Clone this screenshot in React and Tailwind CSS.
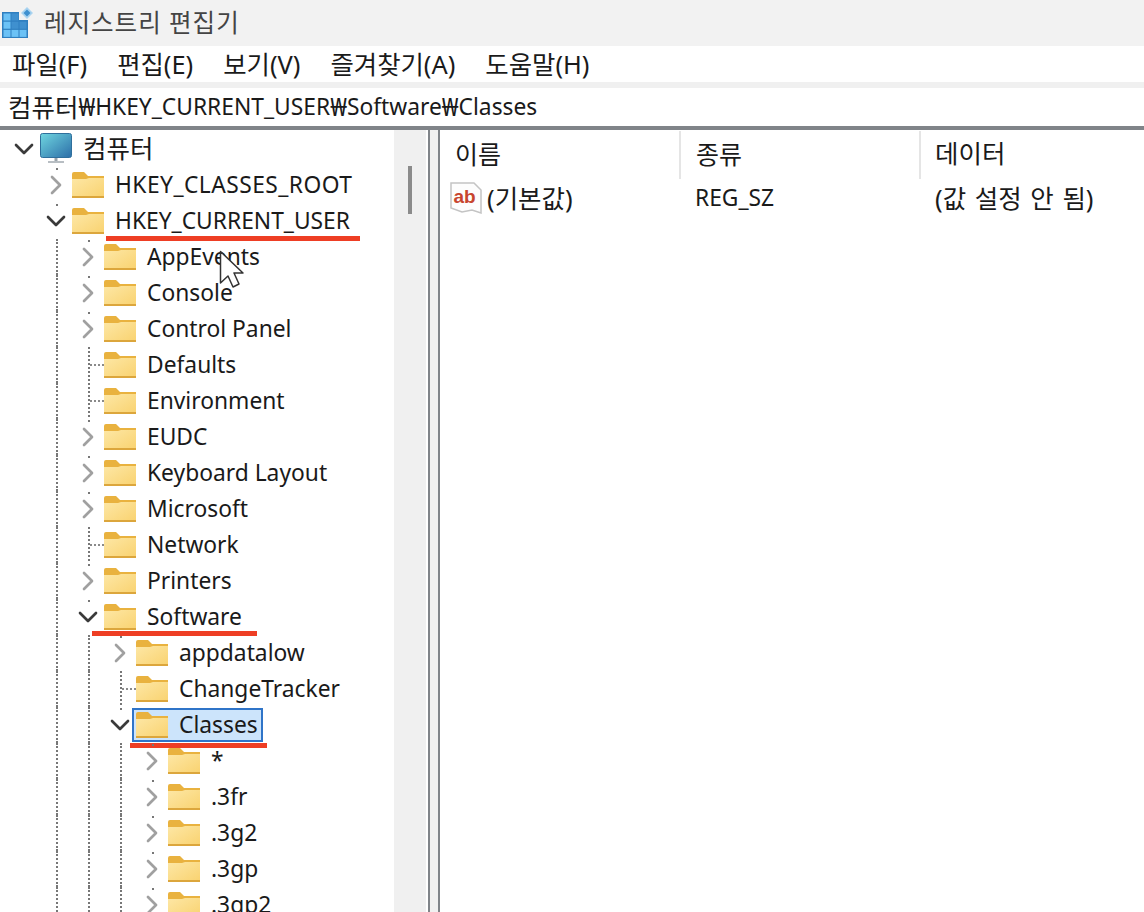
import { ChevronDown, ChevronRight } from "lucide-react";

const SANS = "font-['Noto_Sans','Noto_Sans_CJK_KR',sans-serif]";

// level, label, state: open | closed | leaf, guides = levels that draw a dotted line
const rows = [
  { level: 1, label: "HKEY_CLASSES_ROOT", state: "closed", spacing: 0.45 },
  { level: 1, label: "HKEY_CURRENT_USER", state: "open", mark: { left: 106, top: 33, width: 254 } },
  { level: 2, label: "AppEvents", state: "closed", guides: [1] },
  { level: 2, label: "Console", state: "closed", guides: [1] },
  { level: 2, label: "Control Panel", state: "closed", guides: [1] },
  { level: 2, label: "Defaults", state: "leaf", guides: [1] },
  { level: 2, label: "Environment", state: "leaf", guides: [1] },
  { level: 2, label: "EUDC", state: "closed", guides: [1] },
  { level: 2, label: "Keyboard Layout", state: "closed", guides: [1] },
  { level: 2, label: "Microsoft", state: "closed", guides: [1] },
  { level: 2, label: "Network", state: "leaf", guides: [1] },
  { level: 2, label: "Printers", state: "closed", guides: [1] },
  { level: 2, label: "Software", state: "open", guides: [1], mark: { left: 92, top: 32, width: 165 } },
  { level: 3, label: "appdatalow", state: "closed", guides: [1, 2] },
  { level: 3, label: "ChangeTracker", state: "leaf", guides: [1, 2] },
  { level: 3, label: "Classes", state: "open", guides: [1, 2], selected: true, mark: { left: 130, top: 36, width: 137 } },
  { level: 4, label: "*", state: "closed", guides: [1, 2, 3] },
  { level: 4, label: ".3fr", state: "closed", guides: [1, 2, 3] },
  { level: 4, label: ".3g2", state: "closed", guides: [1, 2, 3] },
  { level: 4, label: ".3gp", state: "closed", guides: [1, 2, 3] },
  { level: 4, label: ".3gp2", state: "closed", guides: [1, 2, 3] },
];

const GRID_CELLS = [
  [0, 0, "#6cc2f6"], [1, 0, "#3f90cf"],
  [0, 1, "#6cc2f6"], [1, 1, "#3f90cf"], [2, 1, "#3f90cf"],
  [0, 2, "#6cc2f6"], [1, 2, "#6cc2f6"], [2, 2, "#6cc2f6"],
];

function RegeditIcon() {
  return (
    <svg width="34" height="38" viewBox="0 0 34 38" className="shrink-0">
      <path d="M2 8 H19 V16 H28 V34 H2 Z" fill="#2f7fc0" />
      {GRID_CELLS.map(([c, r, fill]) => (
        <rect key={`${c}${r}`} x={3.5 + c * 8} y={9.5 + r * 8.2} width="7" height="7" fill={fill} />
      ))}
      <path d="M27 3 L33 9 L27 15 L21 9 Z" fill="#a9d3f0" />
      <path d="M27 5.5 L30.5 9 L27 12.5 L23.5 9 Z" fill="#3f90cf" />
    </svg>
  );
}

function MonitorIcon() {
  return (
    <svg width="33" height="32" viewBox="0 0 33 32" className="shrink-0">
      <defs>
        <linearGradient id="screen" x1="0" y1="0" x2="1" y2="1">
          <stop offset="0" stopColor="#6fd6e0" />
          <stop offset="1" stopColor="#2c6ea8" />
        </linearGradient>
      </defs>
      <rect x="0.5" y="0.5" width="31" height="24" rx="2" fill="url(#screen)" stroke="#2f6f9c" />
      <rect x="14.5" y="25" width="3" height="4" fill="#9aa3aa" />
      <rect x="8" y="28" width="16" height="2" fill="#b8bec3" />
    </svg>
  );
}

function FolderIcon() {
  return (
    <svg width="32" height="26" viewBox="0 0 32 26" className="shrink-0">
      <defs>
        <linearGradient id="folderBody" x1="0" y1="0" x2="1" y2="1">
          <stop offset="0" stopColor="#fde7a5" />
          <stop offset="1" stopColor="#f9d26f" />
        </linearGradient>
      </defs>
      <path d="M0 2 Q0 0 2 0 H12 L16 4 H32 V8 H0 Z" fill="#e9b23f" />
      <path d="M0 7 H14 L17 6 H32 V26 H0 Z" fill="url(#folderBody)" />
      <rect x="0" y="24" width="32" height="2" fill="#dca63c" />
    </svg>
  );
}

function AbIcon() {
  return (
    <svg width="32" height="32" viewBox="0 0 32 32" className="shrink-0">
      <path d="M1 1 H24 L31 8 V31 L22 28 L12 30 L1 26 Z" fill="#fdfdfd" stroke="#c4c4c4" strokeWidth="1.5" />
      <text x="3.5" y="21" fontFamily="Liberation Sans" fontWeight="700" fontSize="19" fill="#c8452e">ab</text>
    </svg>
  );
}

function Cursor() {
  return (
    <svg width="26" height="40" viewBox="0 0 26 40" className="absolute left-[219px] top-[250px]">
      <path d="M1.5 1.5 V33 L9 26 L14 37 L20 34 L15 23 H24 Z" fill="#fff" stroke="#333" strokeWidth="1.5" strokeLinejoin="round" />
    </svg>
  );
}

function Toggle({ state }) {
  if (state === "leaf") {
    return (
      <svg width="32" height="36" viewBox="0 0 32 36" className="shrink-0">
        <path d="M17 0 V36" stroke="#777" strokeWidth="2" strokeDasharray="2 2" />
        <path d="M18 18 H32" stroke="#8a8a8a" strokeWidth="2" strokeDasharray="2 2" />
      </svg>
    );
  }
  return (
    <div className="flex h-full w-8 flex-col items-center">
      <div className="ml-[2px] mt-[1px] size-[2px] shrink-0 bg-[#777]" />
      <div className="-mt-[3px] flex flex-1 items-center">
        {state === "open" ? (
          <ChevronDown size={32} strokeWidth={2} className="text-[#3a3a3a]" />
        ) : (
          <ChevronRight size={32} strokeWidth={2} className="text-[#a0a0a0]" />
        )}
      </div>
    </div>
  );
}

function TreeRow({ level, label, state, guides = [], selected, mark, spacing }) {
  return (
    <div className="relative flex h-9 shrink-0 items-center">
      <div className="w-10 shrink-0" />
      <div className="flex h-full shrink-0">
        {[1, 2, 3].slice(0, level - 1).map((g) => (
          <div key={g} className="w-8 shrink-0 pl-[16px]">
            {guides.includes(g) && <div className="h-full border-l-2 border-dotted border-[#777]" />}
          </div>
        ))}
      </div>
      <div className="flex h-full w-8 shrink-0 items-center justify-center">
        <Toggle state={state} />
      </div>
      <div className={`flex h-[34px] items-center gap-[11px] ${selected ? "-ml-[4px] border-2 border-[#2f74c8] bg-[#cce4fb] pl-[2px] pr-[3px]" : ""}`}>
        <FolderIcon />
        <span
          className={`text-[22.8px] leading-none text-[#1a1a1a] whitespace-nowrap ${SANS}`}
          style={spacing ? { letterSpacing: spacing } : undefined}
        >
          {label}
        </span>
      </div>
      {mark && (
        <div
          className="absolute h-[4.5px] bg-[#ee3e24]"
          style={{ left: mark.left, top: mark.top, width: mark.width }}
        />
      )}
    </div>
  );
}

function ColumnHead({ label, width }) {
  return (
    <div className={`flex h-12 shrink-0 items-center border-r-2 border-[#e5e5e5] pl-[15px] text-[25px] text-[#1a1a1a] ${width}`}>{label}</div>
  );
}

export default function App() {
  return (
    <div className={`relative flex h-[912px] w-[1144px] flex-col overflow-hidden bg-white ${SANS}`}>
      {/* 타이틀바 */}
      <div className="flex h-[46px] shrink-0 items-center gap-[10px] bg-[#f2f2f2]">
        <RegeditIcon />
        <span className="text-[24.5px] tracking-[1px] text-[#444]">레지스트리 편집기</span>
      </div>

      {/* 메뉴 */}
      <div className="flex h-9 shrink-0 items-center gap-[30px] bg-white pl-3 text-[25.4px] text-[#1a1a1a]">
        <span>파일(F)</span>
        <span>편집(E)</span>
        <span>보기(V)</span>
        <span>즐겨찾기(A)</span>
        <span>도움말(H)</span>
      </div>
      <div className="h-[6px] shrink-0 bg-[#f0f0f0]" />

      {/* 주소창 */}
      <div className="flex h-[38px] shrink-0 items-center whitespace-pre pl-2 text-[22.8px] text-[#1a1a1a]">
        <span className="text-[25.5px]">컴퓨터</span>
        <span className="text-[25px]">₩</span>HKEY_CURRENT_USER<span className="text-[25px]">₩</span>Software<span className="text-[25px]">₩</span>Classes
      </div>
      <div className="h-1 shrink-0 bg-[#808489]" />

      <div className="flex min-h-0 flex-1">
        {/* 트리 */}
        <div className="flex w-[428px] shrink-0">
          <div className="flex w-[394px] shrink-0 flex-col overflow-hidden pt-[1px]">
            <div className="flex h-9 shrink-0 items-center">
              <div className="flex w-[40px] shrink-0 justify-center pl-[7px]">
                <ChevronDown size={32} strokeWidth={2} className="shrink-0 text-[#3a3a3a]" />
              </div>
              <MonitorIcon />
              <span className="mb-[2px] ml-[10px] text-[25.5px] text-[#1a1a1a]">컴퓨터</span>
            </div>
            {rows.map((row) => (
              <TreeRow key={row.label} {...row} />
            ))}
          </div>
          <div className="w-8 shrink-0 bg-[#f0f0f0] pl-[14px] pt-9">
            <div className="h-12 w-1 bg-[#8b8b8b]" />
          </div>
          <div className="w-[2px] shrink-0" />
        </div>

        {/* 분할선 */}
        <div className="w-3 shrink-0 border-x-2 border-[#808489] bg-[#f0f0f0]" />

        {/* 값 목록 */}
        <div className="min-w-0 flex-1">
          <div className="mt-[1px] flex">
            <ColumnHead label="이름" width="w-[241px]" />
            <ColumnHead label="종류" width="w-[240px]" />
            <div className="flex h-11 items-center pl-[14px] text-[25.5px] text-[#1a1a1a]">데이터</div>
          </div>
          <div className="mt-[1px] flex h-9 items-center text-[22.8px] text-[#1a1a1a]">
            <div className="flex w-[241px] items-center gap-[5px] pl-[10px]">
              <AbIcon />
              <span className="text-[25.5px]">(기본값)</span>
            </div>
            <div className="w-[240px] pl-[14px]">REG_SZ</div>
            <div className="pl-[14px] text-[25.5px] [word-spacing:2px]">(값 설정 안 됨)</div>
          </div>
        </div>
      </div>

      <Cursor />
    </div>
  );
}
